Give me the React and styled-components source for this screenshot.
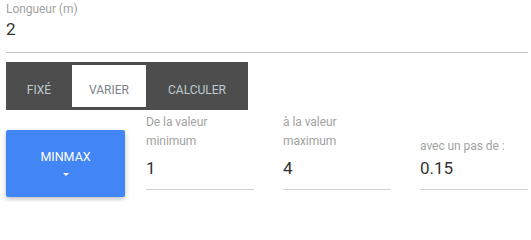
import React from "react";
import styled, { createGlobalStyle } from "styled-components";

const Global = createGlobalStyle`
  html, body { margin: 0; padding: 0; background: #ffffff; }
  body { font-family: Roboto, "Noto Sans", "Liberation Sans", sans-serif; }
  * { box-sizing: border-box; }
`;

const Page = styled.div`
  width: 531px;
  height: 202px;
  padding: 0 3px 0 6px;
  overflow: hidden;
`;

const TopField = styled.div`
  display: flex;
  flex-direction: column;
  padding-top: 1px;
  padding-bottom: 11px;
  border-bottom: 1px solid #c4c4c4;
`;

const Label = styled.div`
  font-size: 12px;
  line-height: ${(p) => p.$lh || 16}px;
  color: #a2a2a2;
  letter-spacing: -0.05px;
`;

const Value = styled.div`
  font-size: 17px;
  line-height: 24px;
  color: #333333;
`;

const TabBar = styled.div`
  margin-top: 9px;
  width: 242px;
  height: 48px;
  background: #4d4d4d;
  display: flex;
  align-items: stretch;
  padding: 3px 0;
`;

const Tab = styled.div`
  width: ${(p) => p.$w}px;
  padding-top: 18px;
  text-align: center;
  font-size: 12px;
  line-height: 14px;
  text-transform: uppercase;
  color: ${(p) => (p.$active ? "#7b8187" : "#bfcacd")};
  background: ${(p) => (p.$active ? "#ffffff" : "transparent")};
`;

const Row = styled.div`
  display: flex;
  align-items: flex-start;
`;

const MinMaxButton = styled.div`
  margin-top: 20px;
  margin-right: 21px;
  width: 119px;
  height: 67px;
  background: #4285f4;
  border-radius: 2px;
  box-shadow: 0 2px 5px rgba(0, 0, 0, 0.26);
  display: flex;
  flex-direction: column;
  align-items: center;
  justify-content: center;
  gap: 9px;
  color: #ffffff;
  font-size: 12.5px;
  line-height: 14px;
  padding-bottom: 1px;
`;

const Caret = styled.span`
  width: 0;
  height: 0;
  border-left: 3.5px solid transparent;
  border-right: 3.5px solid transparent;
  border-top: 3.5px solid #ffffff;
`;

const Fields = styled.div`
  display: flex;
  gap: 29px;
`;

const Field = styled.div`
  width: 108px;
  display: flex;
  flex-direction: column;
  border-bottom: 1px solid #d2d2d2;
  padding-bottom: 9px;
`;

const LabelBox = styled.div`
  height: 46px;
  padding-top: ${(p) => p.$pad}px;
`;

const fields = [
  { label: ["De la valeur", "minimum"], value: "1", pad: 2.5 },
  { label: ["à la valeur", "maximum"], value: "4", pad: 2.5 },
  { label: ["avec un pas de :"], value: "0.15", pad: 26.5 },
];

export default function App() {
  return (
    <Page>
      <Global />
      <TopField>
        <Label>Longueur (m)</Label>
        <Value>2</Value>
      </TopField>
      <TabBar>
        <Tab $w={66}>Fixé</Tab>
        <Tab $w={74} $active>Varier</Tab>
        <Tab $w={102}>Calculer</Tab>
      </TabBar>
      <Row>
        <MinMaxButton>
          <span>MINMAX</span>
          <Caret />
        </MinMaxButton>
        <Fields>
          {fields.map((f) => (
            <Field key={f.value}>
              <LabelBox $pad={f.pad}>
                {f.label.map((l) => (
                  <Label key={l} $lh={19}>{l}</Label>
                ))}
              </LabelBox>
              <Value>{f.value}</Value>
            </Field>
          ))}
        </Fields>
      </Row>
    </Page>
  );
}
